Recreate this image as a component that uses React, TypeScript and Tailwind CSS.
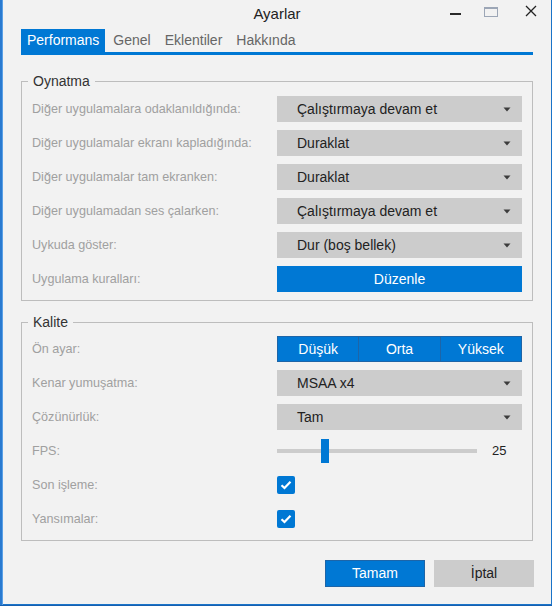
import React from "react";

const font = { fontFamily: '"Liberation Sans", Arial, sans-serif' };

function Caret() {
  return (
    <svg width="8" height="5" viewBox="0 0 8 5" className="shrink-0">
      <path d="M0.5 0.5 L7.5 0.5 L4 4.5 Z" fill="#3c3c3c" />
    </svg>
  );
}

function Select({ value }: { value: string }) {
  return (
    <div className="w-[245px] h-[26px] bg-[#cccccc] flex items-center justify-between pl-[20px] pr-[11px] text-[14px] text-[#222]">
      <span>{value}</span>
      <Caret />
    </div>
  );
}

function Check() {
  return (
    <div className="w-[18px] h-[18px] bg-[#0078d4] rounded-[2px] flex items-center justify-center">
      <svg width="12" height="10" viewBox="0 0 12 10">
        <path d="M1.5 5.2 L4.5 8 L10.5 1.8" fill="none" stroke="#fff" strokeWidth="2.2" />
      </svg>
    </div>
  );
}

function Row({ label, children, h = "h-[26px]" }: { label: string; children: React.ReactNode; h?: string }) {
  return (
    <div className={"flex items-center " + h}>
      <div className="w-[245px] text-[12.6px] text-[#a0a0a0]">{label}</div>
      {children}
    </div>
  );
}

function Group({ title, children, className }: { title: string; children: React.ReactNode; className?: string }) {
  return (
    <div className={"relative border border-[#bdbdbd] w-[512px] pl-[10px] " + (className ?? "")}>
      <span className="absolute -top-[10px] left-[6px] bg-[#f2f2f2] px-[5px] text-[14px] text-[#333] leading-[18px]">
        {title}
      </span>
      {children}
    </div>
  );
}

export default function App() {
  return (
    <div className="w-[552px] h-[606px] bg-[#1660b0] flex" style={font}>
      <div className="w-[3px] h-[605px] bg-[#2a7ad0] border-r border-[#5aa0e6]" />
      <div className="w-[549px] h-[605px] bg-[#f2f2f2] border-r border-b border-[#1a73c8] flex flex-col">
        {/* title bar */}
        <div className="h-[29px] grid grid-cols-[1fr_auto_1fr] items-start">
          <div />
          <div className="text-[15px] text-[#222] pt-[3px]">Ayarlar</div>
          <div className="flex justify-end items-start pr-[14px]">
            <div className="w-[11px] h-[2px] bg-[#2a2a2a] mt-[13px]" />
            <div className="w-[14px] h-[10px] border border-[#9ca6b6] border-t-[2px] mt-[7px] ml-[23px]" />
            <svg width="12" height="12" viewBox="0 0 12 12" className="mt-[5px] ml-[27px]">
              <path d="M1 1 L11 11 M11 1 L1 11" stroke="#222" strokeWidth="1.3" />
            </svg>
          </div>
        </div>

        {/* tabs */}
        <div className="ml-[18px] w-[512px] flex gap-[2px] border-b-[3px] border-[#0078d4] text-[14px]">
          <div className="h-[23px] px-[6px] bg-[#0078d4] text-white flex items-center">Performans</div>
          <div className="h-[23px] px-[6px] text-[#666] flex items-center">Genel</div>
          <div className="h-[23px] px-[6px] text-[#666] flex items-center">Eklentiler</div>
          <div className="h-[23px] px-[6px] text-[#666] flex items-center">Hakkında</div>
        </div>

        <div className="ml-[18px] mt-[26px]">
          <Group title="Oynatma" className="pt-[14px] pb-[8px]">
            <div className="flex flex-col gap-[8px]">
              <Row label="Diğer uygulamalara odaklanıldığında:"><Select value="Çalıştırmaya devam et" /></Row>
              <Row label="Diğer uygulamalar ekranı kapladığında:"><Select value="Duraklat" /></Row>
              <Row label="Diğer uygulamalar tam ekranken:"><Select value="Duraklat" /></Row>
              <Row label="Diğer uygulamadan ses çalarken:"><Select value="Çalıştırmaya devam et" /></Row>
              <Row label="Uykuda göster:"><Select value="Dur (boş bellek)" /></Row>
              <Row label="Uygulama kuralları:">
                <div className="w-[245px] h-[26px] bg-[#0078d4] text-white text-[14px] flex items-center justify-center">
                  Düzenle
                </div>
              </Row>
            </div>
          </Group>

          <Group title="Kalite" className="mt-[21px] pt-[13px] pb-[8px]">
            <div className="flex flex-col gap-[8px]">
              <Row label="Ön ayar:">
                <div className="w-[245px] h-[26px] flex text-white text-[14px] border border-[#1d65a8] bg-[#0078d4]">
                  <div className="flex-1 flex items-center justify-center border-r border-[#1d65a8]">Düşük</div>
                  <div className="flex-1 flex items-center justify-center border-r border-[#1d65a8]">Orta</div>
                  <div className="flex-1 flex items-center justify-center">Yüksek</div>
                </div>
              </Row>
              <Row label="Kenar yumuşatma:"><Select value="MSAA x4" /></Row>
              <Row label="Çözünürlük:"><Select value="Tam" /></Row>
              <Row label="FPS:">
                <div className="flex items-center">
                  <div className="relative w-[200px] h-[4px] bg-[#cccccc]">
                    <div className="absolute left-[44px] -top-[10px] w-[8px] h-[24px] bg-[#0078d4]" />
                  </div>
                  <span className="ml-[15px] text-[13px] text-[#222]">25</span>
                </div>
              </Row>
              <Row label="Son işleme:"><Check /></Row>
              <Row label="Yansımalar:"><Check /></Row>
            </div>
          </Group>

          <div className="w-[513px] flex justify-end gap-[9px] mt-[19px]">
            <div className="w-[100px] h-[27px] bg-[#0078d4] border border-[#1d65a8] text-white text-[14px] flex items-center justify-center">
              Tamam
            </div>
            <div className="w-[100px] h-[27px] bg-[#cccccc] text-[#222] text-[14px] flex items-center justify-center">
              İptal
            </div>
          </div>
        </div>
      </div>
    </div>
  );
}
